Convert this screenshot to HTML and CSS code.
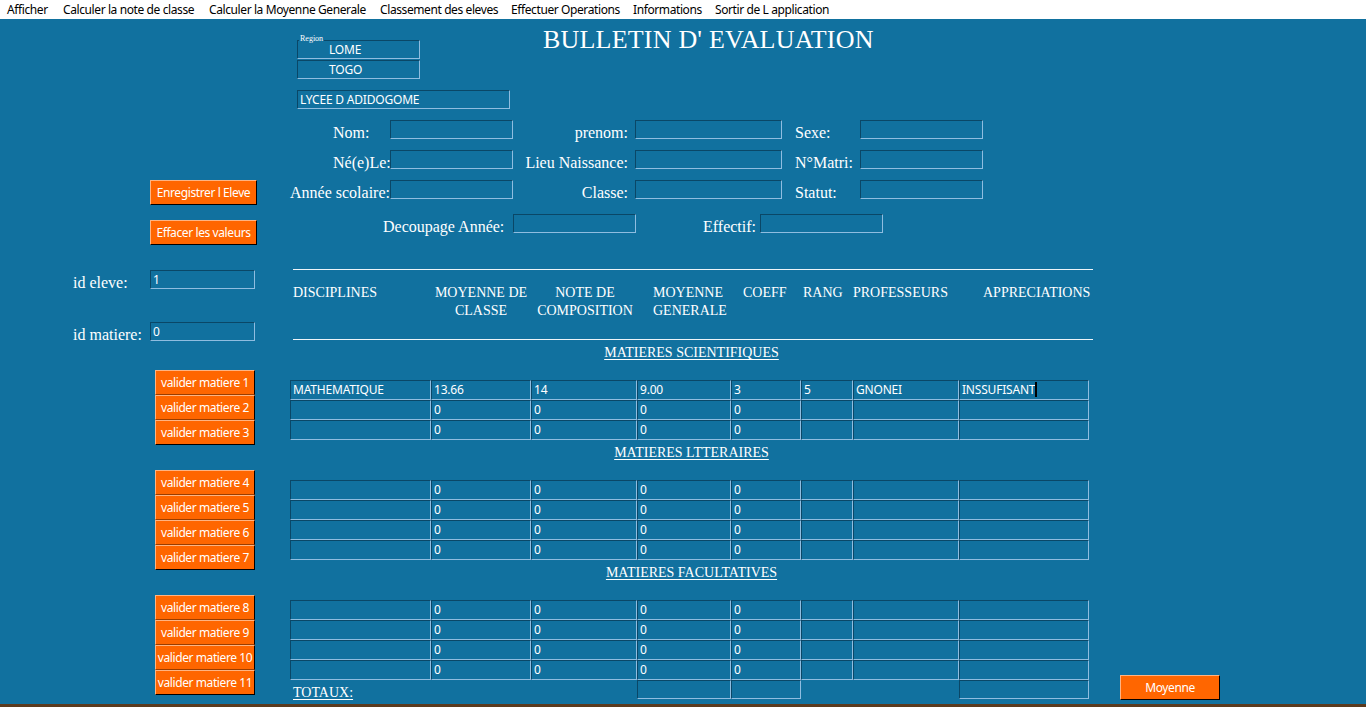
FILE: index.html
```html
<!DOCTYPE html>
<html lang="fr">
<head>
<meta charset="utf-8">
<title>Bulletin d'evaluation</title>
<link rel="stylesheet" href="styles.css">
</head>
<body>
<nav class="menubar">
  <span class="mi m1">Afficher</span>
  <span class="mi m2">Calculer la note de classe</span>
  <span class="mi m3">Calculer la Moyenne Generale</span>
  <span class="mi m4">Classement des eleves</span>
  <span class="mi m5">Effectuer Operations</span>
  <span class="mi m6">Informations</span>
  <span class="mi m7">Sortir de L application</span>
</nav>
<main class="form">
  <aside class="side">
    <button class="obtn act save">Enregistrer l Eleve</button>
    <button class="obtn act clear">Effacer les valeurs</button>
    <div class="idrow first"><span class="lbl idlbl">id eleve:</span><span class="box idbox">1</span></div>
    <div class="idrow second"><span class="lbl idlbl">id matiere:</span><span class="box idbox">0</span></div>
    <div class="vgroup g1">
      <button class="obtn vb">valider matiere 1</button>
      <button class="obtn vb">valider matiere 2</button>
      <button class="obtn vb">valider matiere 3</button>
    </div>
    <div class="vgroup g2">
      <button class="obtn vb">valider matiere 4</button>
      <button class="obtn vb">valider matiere 5</button>
      <button class="obtn vb">valider matiere 6</button>
      <button class="obtn vb">valider matiere 7</button>
    </div>
    <div class="vgroup g3">
      <button class="obtn vb">valider matiere 8</button>
      <button class="obtn vb">valider matiere 9</button>
      <button class="obtn vb">valider matiere 10</button>
      <button class="obtn vb">valider matiere 11</button>
    </div>
  </aside>
  <section class="content">
    <div class="toprow">
      <div class="region">
        <span class="region-cap">Region</span>
        <div class="box rbox">LOME</div>
        <div class="box rbox">TOGO</div>
      </div>
      <h1 class="title">BULLETIN D' EVALUATION</h1>
    </div>
    <div class="box lycee">LYCEE D ADIDOGOME</div>
    <div class="fields">
      <span class="lbl f1">Nom:</span><span class="box"></span>
      <span class="lbl f2">prenom:</span><span class="box"></span>
      <span class="lbl f3">Sexe:</span><span class="box"></span>
      <span class="lbl f1">Né(e)Le:</span><span class="box"></span>
      <span class="lbl f2">Lieu Naissance:</span><span class="box"></span>
      <span class="lbl f3">N°Matri:</span><span class="box"></span>
      <span class="lbl f1 flush">Année scolaire:</span><span class="box"></span>
      <span class="lbl f2">Classe:</span><span class="box"></span>
      <span class="lbl f3">Statut:</span><span class="box"></span>
    </div>
    <div class="row4">
      <span class="lbl dec">Decoupage Année:</span><span class="box w123"></span>
      <span class="lbl eff">Effectif:</span><span class="box w123"></span>
    </div>
    <div class="rule rule-a"></div>
    <div class="thead">
      <div class="th c1">DISCIPLINES</div>
      <div class="th c2">MOYENNE DE<br>CLASSE</div>
      <div class="th c3">NOTE DE<br>COMPOSITION</div>
      <div class="th c4">MOYENNE<br>GENERALE</div>
      <div class="th c5">COEFF</div>
      <div class="th c6">RANG</div>
      <div class="th c7">PROFESSEURS</div>
      <div class="th c8">APPRECIATIONS</div>
    </div>
    <div class="rule rule-b"></div>

    <h2 class="sect">MATIERES SCIENTIFIQUES</h2>
    <div class="tbl">
      <span class="box">MATHEMATIQUE</span><span class="box">13.66</span><span class="box">14</span><span class="box">9.00</span><span class="box">3</span><span class="box">5</span><span class="box">GNONEI</span><span class="box">INSSUFISANT<i class="caret"></i></span>
      <span class="box"></span><span class="box">0</span><span class="box">0</span><span class="box">0</span><span class="box">0</span><span class="box"></span><span class="box"></span><span class="box"></span>
      <span class="box"></span><span class="box">0</span><span class="box">0</span><span class="box">0</span><span class="box">0</span><span class="box"></span><span class="box"></span><span class="box"></span>
    </div>

    <h2 class="sect">MATIERES LTTERAIRES</h2>
    <div class="tbl">
      <span class="box"></span><span class="box">0</span><span class="box">0</span><span class="box">0</span><span class="box">0</span><span class="box"></span><span class="box"></span><span class="box"></span>
      <span class="box"></span><span class="box">0</span><span class="box">0</span><span class="box">0</span><span class="box">0</span><span class="box"></span><span class="box"></span><span class="box"></span>
      <span class="box"></span><span class="box">0</span><span class="box">0</span><span class="box">0</span><span class="box">0</span><span class="box"></span><span class="box"></span><span class="box"></span>
      <span class="box"></span><span class="box">0</span><span class="box">0</span><span class="box">0</span><span class="box">0</span><span class="box"></span><span class="box"></span><span class="box"></span>
    </div>

    <h2 class="sect">MATIERES FACULTATIVES</h2>
    <div class="tbl">
      <span class="box"></span><span class="box">0</span><span class="box">0</span><span class="box">0</span><span class="box">0</span><span class="box"></span><span class="box"></span><span class="box"></span>
      <span class="box"></span><span class="box">0</span><span class="box">0</span><span class="box">0</span><span class="box">0</span><span class="box"></span><span class="box"></span><span class="box"></span>
      <span class="box"></span><span class="box">0</span><span class="box">0</span><span class="box">0</span><span class="box">0</span><span class="box"></span><span class="box"></span><span class="box"></span>
      <span class="box"></span><span class="box">0</span><span class="box">0</span><span class="box">0</span><span class="box">0</span><span class="box"></span><span class="box"></span><span class="box"></span>
    </div>

    <div class="totals">
      <span class="tot-lbl">TOTAUX:</span>
      <span class="box"></span>
      <span class="box"></span>
      <span class="gap"></span>
      <span class="box"></span>
      <span class="gap"></span>
      <button class="obtn moy">Moyenne</button>
    </div>
  </section>
</main>
<div class="strip"></div>
</body>
</html>
```
FILE: styles.css
```css
* {
  box-sizing: border-box;
  margin: 0;
  padding: 0;
}

html,
body {
  width: 1366px;
  height: 707px;
  overflow: hidden;
}

body {
  background: #11719f;
  color: #ffffff;
  font-family: "Noto Sans", "Open Sans", sans-serif;
}

/* ---------- menu bar ---------- */
.menubar {
  height: 19px;
  background: #ffffff;
  color: #000000;
  display: flex;
  padding-left: 7px;
  font-size: 12px;
  line-height: 19px;
  letter-spacing: -0.4px;
}

.mi {
  flex: none;
  white-space: nowrap;
}

.m1 { width: 56px; }
.m2 { width: 146px; }
.m3 { width: 171px; }
.m4 { width: 131px; }
.m5 { width: 122px; }
.m6 { width: 82px; }

/* ---------- main form ---------- */
.form {
  height: 685px;
  display: flex;
}

.side {
  width: 290px;
  flex: none;
}

.content {
  flex: 1;
}

.strip {
  height: 3px;
  background: #5b3a1e;
}

/* ---------- generic controls ---------- */
.box {
  display: block;
  height: 19px;
  border-style: solid;
  border-width: 1px;
  border-color: #0a4767 #8fbde0 #8fbde0 #0a4767;
  font-size: 12px;
  line-height: 17px;
  padding-left: 2px;
  letter-spacing: -0.2px;
  white-space: nowrap;
  overflow: hidden;
  color: #ffffff;
}

.lbl {
  font-family: "Liberation Serif", "Times New Roman", serif;
  font-size: 16px;
  line-height: 25px;
  white-space: nowrap;
  color: #ffffff;
}

.obtn {
  display: block;
  background: #ff6600;
  color: #ffffff;
  font-family: "Noto Sans", "Open Sans", sans-serif;
  font-size: 12px;
  line-height: 17px;
  letter-spacing: -0.4px;
  text-align: center;
  white-space: nowrap;
  border-style: solid;
  border-width: 1px;
  border-color: #ffb482 #000000 #000000 #ffb482;
  cursor: default;
}

/* ---------- left column ---------- */
.act {
  width: 107px;
  height: 25px;
  margin-left: 150px;
}

.save { margin-top: 161px; }
.clear { margin-top: 15px; }

.idrow {
  display: flex;
  height: 19px;
}

.idrow.first { margin-top: 25px; }
.idrow.second { margin-top: 33px; }

.idlbl {
  width: 150px;
  padding-left: 73px;
  flex: none;
}

.idbox {
  width: 105px;
}

.vgroup {
  display: flex;
  flex-direction: column;
  width: 100px;
  margin-left: 155px;
  margin-top: 25px;
}

.vgroup.g1 { margin-top: 29px; }

.vb {
  height: 25px;
  width: 100px;
  border-bottom-color: #9a3d00;
}

.vb:last-child {
  border-bottom-color: #000000;
}

/* ---------- header zone ---------- */
.toprow {
  display: flex;
  align-items: flex-start;
}

.region {
  position: relative;
  width: 123px;
  margin-left: 7px;
  margin-top: 21px;
  display: flex;
  flex-direction: column;
  gap: 1px;
}

.region-cap {
  position: absolute;
  left: 2px;
  top: -6px;
  font-family: "Liberation Serif", serif;
  font-size: 8px;
  line-height: 9px;
  background: #11719f;
  padding: 0 1px;
}

.rbox {
  padding-left: 31px;
}

.title {
  margin-left: 123px;
  margin-top: 6px;
  font-family: "Liberation Serif", "Times New Roman", serif;
  font-weight: normal;
  font-size: 26px;
  line-height: 30px;
  letter-spacing: 0.2px;
  white-space: nowrap;
  color: #ffffff;
}

.lycee {
  width: 213px;
  margin-left: 7px;
  margin-top: 11px;
}

.fields {
  display: grid;
  grid-template-columns: 100px 123px 122px 147px 78px 123px;
  grid-template-rows: repeat(3, 19px);
  row-gap: 11px;
  margin-top: 11px;
}

.f1 { padding-left: 43px; }
.f1.flush { padding-left: 0; }
.f2 { text-align: right; padding-right: 7px; }
.f3 { padding-left: 13px; }

.row4 {
  display: flex;
  height: 19px;
  margin-top: 15px;
}

.w123 {
  width: 123px;
  flex: none;
}

.dec {
  width: 130px;
  margin-left: 93px;
  flex: none;
}

.eff {
  width: 57px;
  margin-left: 67px;
  flex: none;
}

/* ---------- table header ---------- */
.rule {
  height: 1px;
  width: 800px;
  margin-left: 3px;
  background: #eef4f9;
}

.rule-a { margin-top: 36px; }
.rule-b { margin-top: 19px; }

.thead {
  display: flex;
  margin-left: 3px;
  margin-top: 14px;
  height: 36px;
}

.th {
  flex: none;
  font-family: "Liberation Serif", "Times New Roman", serif;
  font-size: 14px;
  line-height: 18px;
  white-space: nowrap;
}

.c1 { width: 140px; }
.c2 { width: 96px; text-align: center; }
.c3 { width: 112px; text-align: center; }
.c4 { width: 100px; padding-left: 12px; }
.c5 { width: 60px; padding-left: 2px; }
.c6 { width: 50px; padding-left: 2px; }
.c7 { width: 130px; padding-left: 2px; }
.c8 { padding-left: 2px; }

.sect {
  width: 803px;
  margin: 4px 0 18px;
  font-family: "Liberation Serif", "Times New Roman", serif;
  font-weight: normal;
  font-size: 14px;
  line-height: 18px;
  text-align: center;
  text-decoration: underline;
  text-underline-offset: 2px;
}

/* ---------- grids ---------- */
.tbl {
  display: grid;
  grid-template-columns: 141px 100px 106px 94px 70px 52px 106px 130px;
  grid-auto-rows: 20px;
}

.tbl .box {
  height: 20px;
  line-height: 18px;
}

.caret {
  display: inline-block;
  width: 2px;
  height: 15px;
  background: #000000;
  vertical-align: -3px;
}

.totals {
  display: grid;
  grid-template-columns: 347px 94px 70px 158px 130px 31px 100px;
  grid-template-rows: 19px;
  align-items: start;
}

.tot-lbl {
  padding-left: 3px;
  font-family: "Liberation Serif", "Times New Roman", serif;
  font-size: 14px;
  line-height: 25px;
  text-decoration: underline;
  text-underline-offset: 2px;
  white-space: nowrap;
}

.moy {
  width: 100px;
  height: 25px;
  margin-top: -5px;
}
```
